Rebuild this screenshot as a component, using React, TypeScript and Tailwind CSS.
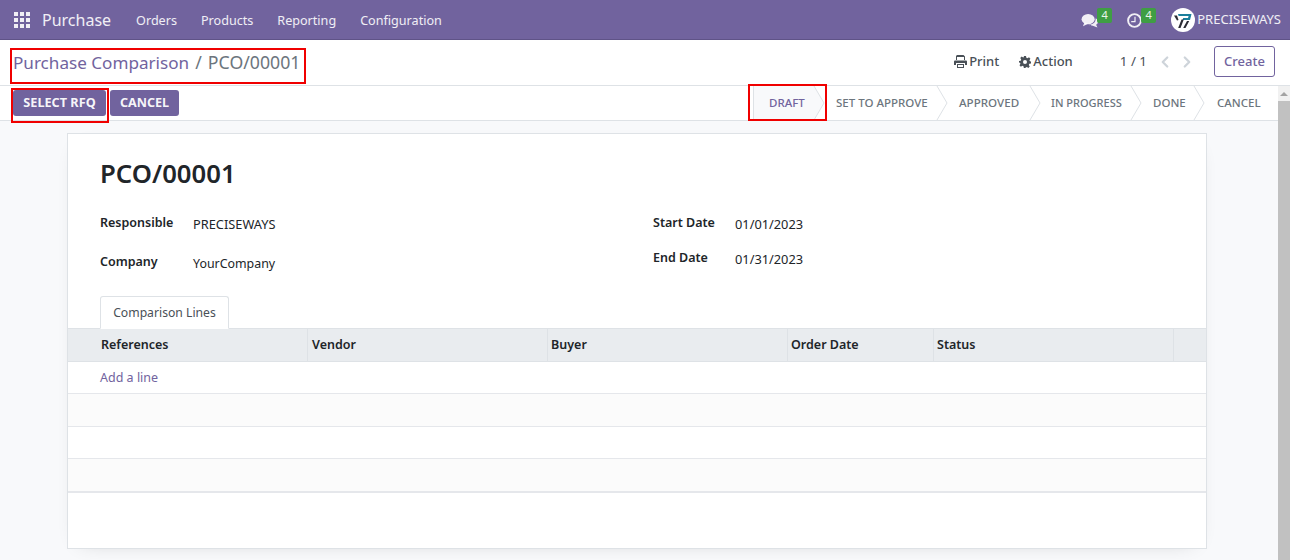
import React from 'react';
import { ChevronLeft, ChevronRight } from 'lucide-react';

const menuItems = ['Orders', 'Products', 'Reporting', 'Configuration'];

const statusSteps = [
  { label: 'DRAFT', width: 'w-[61px]', pad: 'pl-[15px]', size: 'text-[11.5px]', active: true },
  { label: 'SET TO APPROVE', width: 'w-[123px]', pad: 'pl-[22px]', size: 'text-[11.5px]', active: false },
  { label: 'APPROVED', width: 'w-[93px]', pad: 'pl-[22px]', size: 'text-[11.6px]', active: false },
  { label: 'IN PROGRESS', width: 'w-[101px]', pad: 'pl-[21px]', size: 'text-[11px]', active: false },
  { label: 'DONE', width: 'w-[63px]', pad: 'pl-[22px]', size: 'text-[11.5px]', active: false },
  { label: 'CANCEL', width: 'w-[84px]', pad: 'pl-[23px]', size: 'text-[11.5px]', active: false },
];

const columns = [
  { label: 'References', width: 'w-[240px]', pad: 'pl-[33px]' },
  { label: 'Vendor', width: 'w-[240px]', pad: 'pl-[4px]' },
  { label: 'Buyer', width: 'w-[240px]', pad: 'pl-[3px]' },
  { label: 'Order Date', width: 'w-[146px]', pad: 'pl-[3px]' },
  { label: 'Status', width: 'w-[240px]', pad: 'pl-[3px]' },
  { label: '', width: 'w-[32px]', pad: '' },
];

const Badge = ({ className }: { className: string }) => (
  <span className={`absolute w-[15px] h-[15px] bg-[#3f9e44] rounded-[2px] text-white/90 text-[11px] leading-[14px] text-center ${className}`}>
    4
  </span>
);

const App: React.FC = () => {
  return (
    <div className="relative w-[1290px] h-[560px] overflow-hidden bg-[#f8f9fb] text-[#212529] text-[13px] font-['Noto_Sans','Liberation_Sans',sans-serif]">
      {/* top nav */}
      <nav className="h-[40px] bg-[#71639e] border-b border-[#5f5387] flex items-center text-white">
        <svg width="16" height="16" viewBox="0 0 16 16" className="ml-[14px] fill-white opacity-90">
          <rect x="0" y="0" width="4" height="4" />
          <rect x="6" y="0" width="4" height="4" />
          <rect x="12" y="0" width="4" height="4" />
          <rect x="0" y="6" width="4" height="4" />
          <rect x="6" y="6" width="4" height="4" />
          <rect x="12" y="6" width="4" height="4" />
          <rect x="0" y="12" width="4" height="4" />
          <rect x="6" y="12" width="4" height="4" />
          <rect x="12" y="12" width="4" height="4" />
        </svg>
        <span className="ml-[12px] text-[16px] text-white/90 mt-[1px]">Purchase</span>
        <div className="flex ml-[25px] gap-[24px] text-[12.6px] text-white/90 mt-[3px]">
          {menuItems.map((item) => (
            <span key={item}>{item}</span>
          ))}
        </div>
        <div className="ml-auto flex items-center pr-[9px]">
          <div className="relative w-[46px] h-[39px]">
            <svg width="18" height="14" viewBox="0 0 18 15" className="absolute left-0 top-[14px] fill-white/90">
              <ellipse cx="7" cy="5.5" rx="7" ry="5.5" />
              <path d="M3 9 L1.5 13 L7 10.5 Z" />
              <path d="M15 4.5 C17 5.5 18 7 17.5 9 C17 10.5 16 11 15.5 11.5 L17 14.5 L12 12.5 C10 12.5 8.5 12 7.5 11.5 C12 11.5 15.5 9 15 4.5 Z" />
            </svg>
            <Badge className="left-[16px] top-[8px]" />
          </div>
          <div className="relative w-[44px] h-[39px]">
            <svg width="15" height="15" viewBox="0 0 15 15" className="absolute left-0 top-[13px] fill-none stroke-white/90">
              <circle cx="7.5" cy="7.5" r="6.4" strokeWidth="1.9" />
              <path d="M8 3.8 V8.6 H4.2" strokeWidth="1.2" />
            </svg>
            <Badge className="left-[14px] top-[8px]" />
          </div>
          <svg width="24" height="24" viewBox="0 0 24 24" className="shrink-0">
            <circle cx="12" cy="12" r="12" fill="#fff" />
            <path d="M3 7.5 L6 7.5 L7.5 12 L6 12.5 Z" fill="#2b2b33" />
            <path d="M7 6 H20.5 L19 12 H11.5 L12.2 10 H17 L17.6 8 H7.6 Z" fill="#1c7f9c" />
            <path d="M10.5 11.5 L12.8 11.5 L9.5 20 L7.2 20 Z" fill="#2b2b33" />
            <path d="M16 13 L18.2 13 L14.5 20 L12.2 20 Z" fill="#2b2b33" />
          </svg>
          <span className="ml-[2px] text-[13px] text-white/90">PRECISEWAYS</span>
        </div>
      </nav>

      {/* breadcrumb row */}
      <div className="h-[46px] bg-white border-b border-[#dee2e6] flex items-center pb-[2px]">
        <div className="ml-[13px] text-[17.7px] text-[#6c757d] mt-[2px]">
          <span className="text-[17.1px] text-[#71639e]">Purchase Comparison</span> <span className="mx-[1.5px]">/</span> PCO/00001
        </div>
        <div className="ml-auto flex items-center text-[13px] text-[#495057] font-medium">
          <svg width="13" height="13" viewBox="0 0 13 13" className="fill-[#495057] mr-[2px]">
            <path d="M3 0 H9.5 L11 1.5 V5 H10 V2 H3 V5 H2 V1 Z" />
            <path d="M1 5.5 H12 A1 1 0 0 1 13 6.5 V10 H11 V8 H2 V10 H0 V6.5 A1 1 0 0 1 1 5.5 Z" />
            <path d="M3 9 H10 V13 H3 Z M4 10 V12 H9 V10 Z" fillRule="evenodd" />
          </svg>
          <span>Print</span>
          <svg width="12" height="12" viewBox="0 0 24 24" className="fill-[#495057] ml-[20px] mr-[2px]">
            <path d="M10 0h4l.7 3.4 2.3 1 3-1.9 2.8 2.8-1.9 3 1 2.3L24 11v4l-3.4.7-1 2.3 1.9 3-2.8 2.8-3-1.9-2.3 1L12.7 24h-3l-.7-3.4-2.3-1-3 1.9L1 18.7l1.9-3-1-2.3L0 13V10l3.4-.7 1-2.3-1.9-3L5.3 1.2l3 1.9 1.1-.4z M12 8a4 4 0 1 0 0 8 4 4 0 0 0 0-8z" fillRule="evenodd" />
          </svg>
          <span>Action</span>
        </div>
        <span className="ml-[47px] text-[13.4px] text-[#495057]">1 / 1</span>
        <ChevronLeft size={18} strokeWidth={3} className="ml-[9px] text-[#ced4da]" />
        <ChevronRight size={18} strokeWidth={3} className="ml-[4px] text-[#ced4da]" />
        <button className="ml-[18px] mr-[15px] w-[61px] h-[31px] border border-[#71639e] rounded-[3px] text-[#71639e] text-[13px] font-medium">
          Create
        </button>
      </div>

      {/* buttons and statusbar */}
      <div className="h-[35px] bg-white border-b border-[#dee2e6] flex items-center pr-[12px]">
        <button className="ml-[13px] w-[93px] h-[26px] bg-[#71639e] rounded-[3px] text-white/95 text-[12.7px] font-bold">SELECT RFQ</button>
        <button className="ml-[4px] w-[69px] h-[26px] bg-[#71639e] rounded-[3px] text-white/95 text-[12.6px] font-bold">CANCEL</button>
        <div className="ml-auto flex h-full">
          {statusSteps.map((step, i) => (
            <div
              key={step.label}
              className={`relative flex items-center font-medium ${step.size} ${step.width} ${step.pad} ${
                step.active ? 'bg-[#f8f9fb] text-[#71639e] border-l border-[#dee2e6]' : 'text-[#6c757d]'
              }`}
            >
              {step.label}
              {i < statusSteps.length - 1 && (
                <svg width="10" height="34" viewBox="0 0 10 34" className="absolute -right-[10px] top-0 overflow-visible">
                  {step.active && <path d="M0 0 L10 17 L0 34 Z" fill="#f8f9fb" />}
                  <path d="M0 0 L10 17 L0 34" fill="none" stroke="#dee2e6" />
                </svg>
              )}
            </div>
          ))}
        </div>
      </div>

      {/* scrollbar */}
      <div className="absolute right-0 top-[86px] bottom-0 w-[12px] bg-[#f1f1f1] flex flex-col items-center">
        <div className="mt-[6px] w-0 h-0 border-x-[4px] border-x-transparent border-b-[4px] border-b-[#a3a3a3]" />
        <div className="mt-[5px] w-full flex-1 bg-[#c1c1c1]" />
      </div>

      {/* form sheet */}
      <div className="w-[1140px] h-[416px] ml-[67px] mt-[12px] bg-white border border-[#dee2e6] shadow-[0_5px_20px_-15px_rgba(0,0,0,0.3)]">
        <h1 className="ml-[32px] mt-[22px] text-[25.7px] leading-[36px] font-semibold text-[#212529]">PCO/00001</h1>
        <div className="grid grid-cols-2 mt-[20px] ml-[32px]">
          <div>
            <div className="flex h-[39px]">
              <span className="w-[93px] font-semibold text-[12.5px] mt-[2px]">Responsible</span>
              <span className="mt-[3px] text-[12.8px]">PRECISEWAYS</span>
            </div>
            <div className="flex h-[39px]">
              <span className="w-[93px] font-semibold text-[12.5px] mt-[2px]">Company</span>
              <span className="mt-[4px] text-[12.4px]">YourCompany</span>
            </div>
          </div>
          <div>
            <div className="flex h-[35px]">
              <span className="w-[82px] font-semibold text-[12.5px] mt-[2px]">Start Date</span>
              <span className="mt-[3px] text-[12.8px]">01/01/2023</span>
            </div>
            <div className="flex h-[35px]">
              <span className="w-[82px] font-semibold text-[12.5px] mt-[2px]">End Date</span>
              <span className="mt-[3px] text-[12.8px]">01/31/2023</span>
            </div>
          </div>
        </div>
        <div className="mt-[6px] ml-[32px] -mb-px relative w-[129px] h-[33px] pt-[2px] bg-white border border-[#dee2e6] border-b-white rounded-t-[3px] flex items-center justify-center text-[#495057] text-[12.2px]">
          Comparison Lines
        </div>

        <div className="flex h-[34px] bg-[#e9ecef] border-y border-[#dee2e6] font-semibold text-[12.5px]">
          {columns.map((col, i) => (
            <div
              key={i}
              className={`flex items-center ${col.width} ${col.pad} ${i < columns.length - 1 ? 'border-r border-[#dee2e6]' : ''}`}
            >
              {col.label}
            </div>
          ))}
        </div>
        <div className="h-[32px] border-b border-[#e5e7eb] pl-[32px] pt-[2px] flex items-center text-[#71639e] text-[12.5px]">Add a line</div>
        <div className="h-[33px] border-b border-[#e5e7eb] bg-[#fbfbfb]" />
        <div className="h-[32px] border-b border-[#e5e7eb]" />
        <div className="h-[34px] border-b-2 border-[#e5e7eb] bg-[#fbfbfb]" />
      </div>

      {/* red annotation boxes */}
      <div className="absolute left-[10px] top-[48px] w-[296px] h-[36px] border-2 border-[#f00000]" />
      <div className="absolute left-[11px] top-[88px] w-[98px] h-[35px] border-2 border-[#f00000]" />
      <div className="absolute left-[748px] top-[84px] w-[79px] h-[37px] border-2 border-[#f00000]" />
    </div>
  );
};

export default App;
